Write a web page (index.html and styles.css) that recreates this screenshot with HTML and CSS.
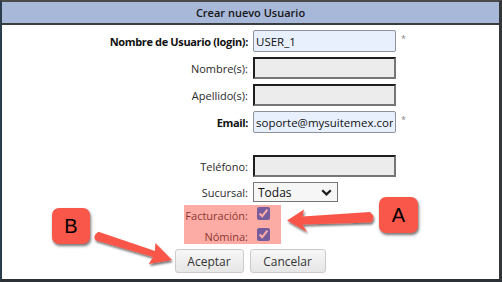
FILE: index.html
```html
<!DOCTYPE html>
<html lang="es">
<head>
    <meta charset="UTF-8">
    <title>Crear nuevo Usuario</title>
    <link rel="stylesheet" href="styles.css">
</head>
<body>
    <div class="page">
        <div class="panel">
            <div class="panel-title">Crear nuevo Usuario</div>
            <div class="panel-body">
                <div class="form-grid">
                    <label class="lbl lbl-strong">Nombre de Usuario (login):</label>
                    <div class="field"><input class="inp inp-fill" type="text" value="USER_1"><span class="req">*</span></div>

                    <label class="lbl">Nombre(s):</label>
                    <div class="field"><input class="inp inp-inset" type="text"></div>

                    <label class="lbl">Apellido(s):</label>
                    <div class="field"><input class="inp inp-inset" type="text"></div>

                    <label class="lbl lbl-strong">Email:</label>
                    <div class="field"><input class="inp inp-fill" type="text" value="soporte@mysuitemex.com"><span class="req">*</span></div>

                    <div class="spacer"></div>
                    <div class="spacer"></div>

                    <label class="lbl">Teléfono:</label>
                    <div class="field"><input class="inp inp-inset" type="text"></div>

                    <label class="lbl">Sucursal:</label>
                    <div class="field">
                        <div class="select">
                            <span>Todas</span>
                            <svg width="11" height="7" viewBox="0 0 11 7"><path d="M1.2 1.2 L5.5 5.4 L9.8 1.2" fill="none" stroke="#1d1d1d" stroke-width="2.2"/></svg>
                        </div>
                    </div>

                    <label class="lbl">Facturación:</label>
                    <div class="field check-row"><input class="chk" type="checkbox" checked></div>

                    <label class="lbl">Nómina:</label>
                    <div class="field check-row"><input class="chk" type="checkbox" checked></div>
                </div>

                <div class="actions">
                    <button class="btn" type="button">Aceptar</button>
                    <button class="btn btn-cancel" type="button">Cancelar</button>
                </div>
            </div>
        </div>

        <!-- anotaciones -->
        <div class="highlight"></div>
        <div class="badge badge-a">A</div>
        <div class="badge badge-b">B</div>
        <svg class="arrows" width="502" height="282" viewBox="0 0 502 282">
            <defs>
                <filter id="shadow" x="-20%" y="-40%" width="140%" height="180%">
                    <feDropShadow dx="1" dy="2" stdDeviation="1.3" flood-color="#000" flood-opacity="0.55"/>
                </filter>
            </defs>
            <path filter="url(#shadow)" fill="#f9574a" d="M287 220.5 L304 209.5 L302.5 216.5 L370 212 Q376.5 217 371 222.5 L302.5 224.5 L307 232 Z"/>
            <path filter="url(#shadow)" fill="#f9574a" d="M98.4 231.7 L155 251 L155.3 243 L172 260 L148.7 264 L153 257 L95.6 240.3 Q92 236 98.4 231.7 Z"/>
        </svg>
    </div>
</body>
</html>
```

FILE: styles.css
```css
:root {
    --frame: #3a3d40;
    --title-bg: #a8b8d9;
    --note-red: #f9574a;
}

body {
    margin: 0;
    font-family: "Open Sans", "Liberation Sans", sans-serif;
    font-size: 11px;
    color: #222;
    background: #fff;
}

.page {
    position: relative;
    width: 502px;
    height: 282px;
}

.panel {
    box-sizing: border-box;
    width: 502px;
    height: 282px;
    border-style: solid;
    border-width: 2px 3px 3px 2px;
    border-color: #4a4a4a #33373a #2b3137 #2a3d4c;
    background: #fff;
}

.panel-title {
    height: 21px;
    line-height: 21px;
    text-align: center;
    background: var(--title-bg);
    border-bottom: 2px solid var(--frame);
    font-weight: 600;
    color: #151515;
}

.panel-body {
    padding-top: 5px;
}

.form-grid {
    display: grid;
    grid-template-columns: 246px 1fr;
    column-gap: 5px;
    row-gap: 5px;
    align-items: center;
}

.lbl {
    text-align: right;
    color: #2a2a2a;
}

.lbl-strong {
    font-weight: 700;
    letter-spacing: -0.35px;
    color: #111;
}

.field {
    display: flex;
    align-items: center;
}

.inp {
    box-sizing: border-box;
    width: 143px;
    height: 22px;
    margin: 0;
    padding: 0 2px;
    font-family: inherit;
    font-size: 11.5px;
    color: #111;
    outline: none;
}

.inp-fill {
    background: #e8f0fe;
    border: 1px solid #8d939c;
    border-radius: 2px;
}

.inp-inset {
    background: #ececec;
    border: 2px solid;
    border-color: #1e1e1e #767676 #767676 #1e1e1e;
}

.req {
    margin-left: 5px;
    font-size: 9px;
    color: #888;
    margin-top: -5px;
}

.spacer {
    height: 12px;
}

.select {
    box-sizing: border-box;
    width: 85px;
    height: 20px;
    display: flex;
    align-items: center;
    justify-content: space-between;
    padding: 0 5px 0 4px;
    border: 1px solid #767676;
    background: #f6f6f6;
    font-size: 12px;
    color: #111;
}

.check-row {
    height: 16px;
    align-items: flex-start;
}

.chk {
    width: 13px;
    height: 13px;
    margin: 0 0 0 4px;
    accent-color: #0a6cf0;
}

.actions {
    display: flex;
    justify-content: center;
    gap: 6px;
    margin-top: 5px;
    padding-right: 1px;
}

.btn {
    box-sizing: border-box;
    width: 69px;
    height: 24px;
    padding: 0;
    font-family: inherit;
    font-size: 12px;
    color: #333;
    background: linear-gradient(#f7f7f7, #e6e6e6);
    border: 1px solid #cbcbcb;
    border-radius: 3px;
}

.btn-cancel {
    width: 76px;
}

.highlight {
    position: absolute;
    left: 184px;
    top: 205px;
    width: 97px;
    height: 39px;
    background: rgba(250, 70, 55, 0.45);
}

.badge {
    position: absolute;
    width: 39px;
    height: 36px;
    display: flex;
    align-items: center;
    justify-content: center;
    background: var(--note-red);
    border-radius: 7px;
    box-shadow: 1px 2px 3px rgba(0, 0, 0, 0.55);
    font-family: "Liberation Sans", sans-serif;
    font-size: 20px;
    color: #000;
}

.badge-a {
    left: 379px;
    top: 197px;
}

.badge-b {
    left: 52px;
    top: 208px;
    width: 38px;
}

.arrows {
    position: absolute;
    left: 0;
    top: 0;
    pointer-events: none;
}
```
